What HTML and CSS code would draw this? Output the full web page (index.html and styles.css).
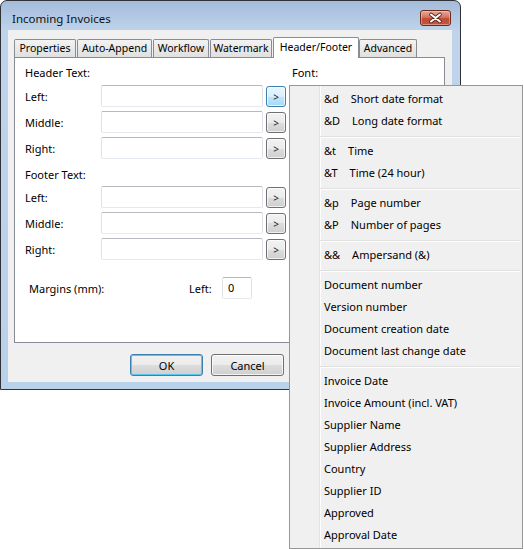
FILE: index.html
```html
<!DOCTYPE html>
<html>
<head>
<meta charset="utf-8">
<link rel="stylesheet" href="styles.css">
</head>
<body>
<div class="screen">
  <div class="window">
    <div class="titlebar">
      <span class="title">Incoming Invoices</span>
      <div class="close">
        <svg width="29" height="14" viewBox="0 0 29 14">
          <path d="M10 3.5 L19 10.5 M19 3.5 L10 10.5" stroke="#5a2418" stroke-width="3.6" stroke-linecap="round" fill="none"/>
          <path d="M10 3.5 L19 10.5 M19 3.5 L10 10.5" stroke="#ffffff" stroke-width="2" stroke-linecap="round" fill="none"/>
        </svg>
      </div>
    </div>
    <div class="client">
      <div class="tabs">
        <div class="tab t-prop">Properties</div>
        <div class="tab t-auto">Auto-Append</div>
        <div class="tab t-work">Workflow</div>
        <div class="tab t-water">Watermark</div>
        <div class="tab active t-hf">Header/Footer</div>
        <div class="tab t-adv">Advanced</div>
      </div>
      <div class="panel">
        <div class="form">
          <div class="section head">Header Text:</div>
          <div class="row"><span class="lbl">Left:</span><span class="input"></span><span class="mini hot">&gt;</span></div>
          <div class="row"><span class="lbl">Middle:</span><span class="input"></span><span class="mini">&gt;</span></div>
          <div class="row"><span class="lbl">Right:</span><span class="input"></span><span class="mini">&gt;</span></div>
          <div class="section foot">Footer Text:</div>
          <div class="row"><span class="lbl">Left:</span><span class="input"></span><span class="mini">&gt;</span></div>
          <div class="row"><span class="lbl">Middle:</span><span class="input"></span><span class="mini">&gt;</span></div>
          <div class="row"><span class="lbl">Right:</span><span class="input"></span><span class="mini">&gt;</span></div>
          <div class="margins">
            <span class="mlabel">Margins (mm):</span>
            <span class="mleft">Left:</span>
            <span class="input small">0</span>
          </div>
        </div>
        <div class="fontcol">Font:</div>
      </div>
      <div class="buttons">
        <span class="btn default">OK</span>
        <span class="btn">Cancel</span>
      </div>
    </div>
  </div>

  <div class="menu">
    <div class="mi"><span class="code">&amp;d</span>Short date format</div>
    <div class="mi"><span class="code">&amp;D</span>Long date format</div>
    <div class="sep"></div>
    <div class="mi"><span class="code">&amp;t</span>Time</div>
    <div class="mi"><span class="code">&amp;T</span>Time (24 hour)</div>
    <div class="sep"></div>
    <div class="mi"><span class="code">&amp;p</span>Page number</div>
    <div class="mi"><span class="code">&amp;P</span>Number of pages</div>
    <div class="sep"></div>
    <div class="mi"><span class="code">&amp;&amp;</span>Ampersand (&amp;)</div>
    <div class="sep"></div>
    <div class="mi">Document number</div>
    <div class="mi">Version number</div>
    <div class="mi">Document creation date</div>
    <div class="mi">Document last change date</div>
    <div class="sep"></div>
    <div class="mi">Invoice Date</div>
    <div class="mi">Invoice Amount (incl. VAT)</div>
    <div class="mi">Supplier Name</div>
    <div class="mi">Supplier Address</div>
    <div class="mi">Country</div>
    <div class="mi">Supplier ID</div>
    <div class="mi">Approved</div>
    <div class="mi">Approval Date</div>
  </div>
</div>
</body>
</html>
```
FILE: styles.css
```css
* { box-sizing: border-box; }
html, body { margin: 0; padding: 0; background: #ffffff; }
body {
  font-family: "Noto Sans", "Open Sans", sans-serif;
  font-size: 11px;
  color: #000;
}
.screen {
  position: relative;
  width: 524px;
  height: 549px;
  overflow: hidden;
}

/* window frame */
.window {
  width: 461px;
  height: 390px;
  border: 1px solid #2f3236;
  border-radius: 7px 7px 0 0;
  background: linear-gradient(#a4bcda 0, #b6cce6 20px, #bfd4eb 30px, #bad1ea 100%);
  display: flex;
  flex-direction: column;
}
.titlebar {
  height: 29px;
  display: flex;
  align-items: flex-start;
  flex: none;
}
.title {
  padding: 10px 0 0 11px;
  line-height: 16px;
  font-size: 11.5px;
  color: #111;
}
.close {
  margin: 9px 9px 0 auto;
  width: 31px;
  height: 16px;
  border: 1px solid #6e2a1c;
  border-radius: 3px;
  background: linear-gradient(#e8a899 0, #d47462 45%, #c24a33 55%, #c3563d 100%);
  box-shadow: inset 0 0 0 1px rgba(255, 210, 200, 0.45);
  display: flex;
  align-items: center;
  justify-content: center;
}
.close svg { display: block; }

.client {
  flex: none;
  margin: 0 8px 7px 7px;
  height: 352px;
  background: #f0f0f0;
  padding: 7px 0 0 6px;
}

/* tabs */
.tabs {
  display: flex;
  align-items: flex-end;
  height: 20px;
}
.tab {
  height: 18px;
  border: 1px solid #898c95;
  border-bottom: none;
  border-radius: 2px 2px 0 0;
  background: linear-gradient(#f3f3f3, #e9e9e9 50%, #e0e0e0 100%);
  line-height: 16px;
  font-size: 10.5px;
  text-align: center;
  margin-right: 1px;
  white-space: nowrap;
}
.t-prop { width: 62px; }
.t-auto { width: 75px; }
.t-work { width: 56px; }
.t-water { width: 62px; }
.t-hf { width: 86px; margin-right: 0; }
.t-adv { width: 58px; }
.tab.active {
  height: 21px;
  margin-bottom: -1px;
  background: #ffffff;
  position: relative;
  z-index: 1;
  line-height: 18px;
}

.panel {
  width: 431px;
  height: 286px;
  border: 1px solid #898c95;
  background: #ffffff;
  padding: 8px 0 0 10px;
  display: flex;
}
.form {
  width: 261px;
  display: flex;
  flex-direction: column;
  flex: none;
}
.section {
  height: 14px;
  line-height: 14px;
}
.section.head { margin-bottom: 5px; }
.section.foot { margin-top: 5px; margin-bottom: 4px; }
.row {
  display: flex;
  align-items: center;
  height: 22px;
  margin-bottom: 4px;
}
.lbl { width: 76px; flex: none; }
.input {
  width: 162px;
  height: 22px;
  flex: none;
  border: 1px solid;
  border-color: #b5b8bf #dfe2e8 #e3e9ef #dfe2e8;
  border-radius: 2px;
  background: #fff;
}
.mini {
  width: 20px;
  height: 21px;
  margin-left: 3px;
  align-self: flex-end;
  flex: none;
  border: 1px solid #707070;
  border-radius: 3px;
  background: linear-gradient(#f2f2f2 0, #ebebeb 50%, #dddddd 50%, #cfcfcf 100%);
  box-shadow: inset 0 0 0 1px rgba(255, 255, 255, 0.7);
  display: flex;
  align-items: center;
  justify-content: center;
  font-size: 10px;
  line-height: 1;
  padding-top: 1px;
  color: #222;
}
.mini.hot {
  border-color: #3c7fb1;
  background: linear-gradient(#eaf6fd 0, #d9f0fc 50%, #bee6fd 50%, #a7d9f5 100%);
}
.margins {
  display: flex;
  align-items: center;
  height: 22px;
  margin-top: 13px;
  padding-left: 4px;
}
.mlabel { width: 160px; }
.mleft { width: 33px; }
.input.small {
  width: 30px;
  padding-left: 5px;
  line-height: 20px;
}
.fontcol {
  margin-left: 6px;
  height: 14px;
  line-height: 14px;
}

/* dialog buttons */
.buttons {
  display: flex;
  gap: 8px;
  margin-top: 11px;
  padding-left: 116px;
}
.btn {
  width: 73px;
  height: 22px;
  border: 1px solid #707070;
  border-radius: 3px;
  background: linear-gradient(#f2f2f2 0, #ebebeb 50%, #dddddd 50%, #cfcfcf 100%);
  box-shadow: inset 0 0 0 1px rgba(255, 255, 255, 0.75);
  display: flex;
  align-items: center;
  justify-content: center;
  line-height: 1;
}
.btn.default {
  border-color: #3c7fb1;
  box-shadow: inset 0 0 0 1px #58c7f0;
}

/* popup menu */
.menu {
  position: absolute;
  left: 289px;
  top: 85px;
  width: 234px;
  height: 464px;
  border: 1px solid #979797;
  padding: 2px;
  background: linear-gradient(to right, #f0f0f0 0, #f0f0f0 29px, #e2e3e3 29px, #e2e3e3 30px, #ffffff 30px, #ffffff 31px, #f0f0f0 31px);
  background-color: #f0f0f0;
  z-index: 5;
}
.mi {
  height: 22px;
  line-height: 22px;
  padding-left: 32px;
  white-space: nowrap;
}
.code {
  display: inline-block;
  margin-right: 12px;
}
.sep {
  height: 8px;
  margin-left: 28px;
  background: linear-gradient(transparent 0, transparent 4px, #e0e0e0 4px, #e0e0e0 5px, #ffffff 5px, #ffffff 6px, transparent 6px);
}
```
